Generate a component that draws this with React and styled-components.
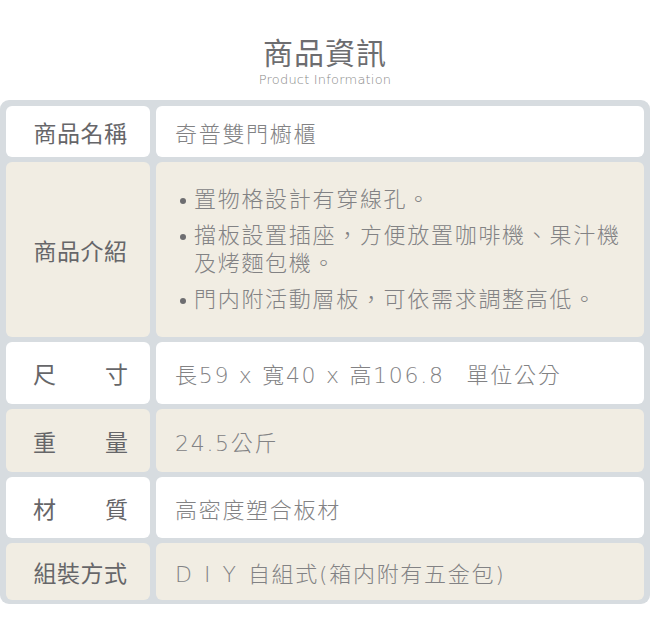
import React from 'react'
import styled, { createGlobalStyle } from 'styled-components'

const GlobalStyle = createGlobalStyle`
  html, body {
    margin: 0;
    padding: 0;
    background: #ffffff;
  }
  body {
    font-family: "Noto Sans CJK TC", "Noto Sans", sans-serif;
  }
`

const Page = styled.div`
  width: 650px;
  height: 620px;
  background: #ffffff;
  display: flex;
  flex-direction: column;
  align-items: center;
  padding-top: 35px;
  box-sizing: border-box;
`

const Title = styled.h1`
  margin: 0;
  font-size: 30px;
  line-height: 32px;
  font-weight: 400;
  color: #6d6d70;
  letter-spacing: 1px;
`

const SubTitle = styled.div`
  margin-top: 5px;
  font-family: "DejaVu Sans", "Noto Sans", sans-serif;
  font-size: 13px;
  line-height: 16px;
  font-weight: 200;
  color: #8a8a8a;
  letter-spacing: 0.2px;
`

const Frame = styled.div`
  margin-top: 12px;
  width: 650px;
  box-sizing: border-box;
  background: #d7dce0;
  border-radius: 9px;
  padding: 6px 6px 4px 6px;
  display: grid;
  grid-template-columns: 144px 1fr;
  column-gap: 6px;
  row-gap: 5px;
`

const Cell = styled.div`
  background: ${props => props.tone === 'beige' ? '#f1ede3' : '#ffffff'};
  border-radius: 6px;
  height: ${props => props.h}px;
  display: flex;
  align-items: center;
  box-sizing: border-box;
`

const Label = styled(Cell)`
  padding: 0 22px 0 27px;
  justify-content: ${props => props.spread ? 'space-between' : 'center'};
  font-size: 23px;
  color: #666669;
  letter-spacing: ${props => props.spread ? '0' : '0.5px'};
`

const Value = styled(Cell)`
  padding: 0 10px 0 19px;
  font-family: "DejaVu Sans", "Noto Sans CJK TC", sans-serif;
  font-size: 22px;
  color: #828284;
  letter-spacing: 1.7px;
  font-weight: 200;
`

const Spaced = styled.span`
  letter-spacing: 12px;
`

const Gap = styled.span`
  display: inline-block;
  width: ${props => props.w}px;
`

const BulletList = styled.ul`
  margin: 0;
  padding: 0;
  list-style: none;
  display: flex;
  flex-direction: column;
  gap: 8px;
`

const Bullet = styled.li`
  position: relative;
  padding-left: 19px;
  line-height: 28px;

  &::before {
    content: '';
    position: absolute;
    left: 5px;
    top: 12px;
    width: 6px;
    height: 6px;
    border-radius: 50%;
    background: #6d6d70;
  }
`

const rows = [
  { label: '商品名稱', h: 51, tone: 'white', value: '奇普雙門櫥櫃' },
  {
    label: '商品介紹',
    h: 175,
    tone: 'beige',
    bullets: [
      '置物格設計有穿線孔。',
      '擋板設置插座，方便放置咖啡機、果汁機及烤麵包機。',
      '門内附活動層板，可依需求調整高低。'
    ]
  },
  { label: ['尺', '寸'], h: 62, tone: 'white', size: true },
  { label: ['重', '量'], h: 63, tone: 'beige', value: '24.5公斤' },
  { label: ['材', '質'], h: 61, tone: 'white', value: '高密度塑合板材' },
  { label: '組裝方式', h: 57, tone: 'beige', diy: true }
]

const App = () => {
  return (
    <Page>
      <GlobalStyle />
      <Title>商品資訊</Title>
      <SubTitle>Product Information</SubTitle>
      <Frame>
        {rows.map((row, i) => {
          const spread = Array.isArray(row.label)
          return (
            <React.Fragment key={i}>
              <Label h={row.h} tone={row.tone} spread={spread}>
                {spread
                  ? row.label.map(c => <span key={c}>{c}</span>)
                  : row.label}
              </Label>
              <Value h={row.h} tone={row.tone}>
                {row.bullets && (
                  <BulletList>
                    {row.bullets.map(b => <Bullet key={b}>{b}</Bullet>)}
                  </BulletList>
                )}
                {row.value}
                {row.size && (
                  <span>長59 x 寬40 x 高106.8<Gap w={22} />單位公分</span>
                )}
                {row.diy && (
                  <span><Spaced>DIY</Spaced>自組式(箱内附有五金包)</span>
                )}
              </Value>
            </React.Fragment>
          )
        })}
      </Frame>
    </Page>
  )
}

export default App
